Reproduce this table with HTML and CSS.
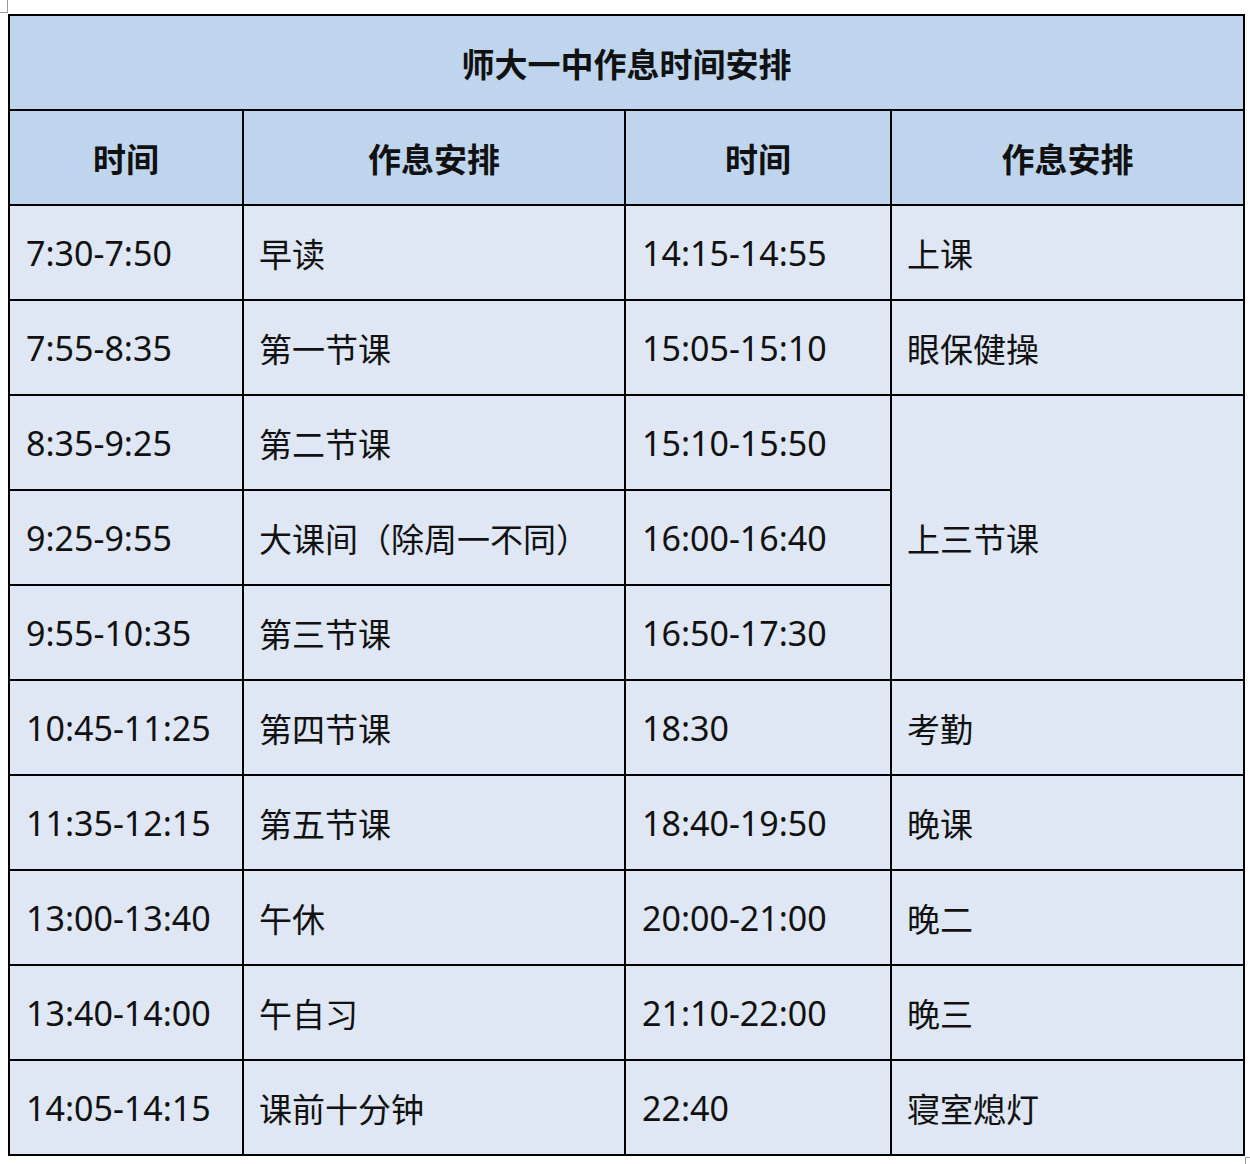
FILE: index.html
```html
<!DOCTYPE html>
<html lang="zh-CN">
<head>
<meta charset="utf-8">
<title>师大一中作息时间安排</title>
<link rel="stylesheet" href="styles.css">
</head>
<body>
<span class="mark mark-tl"></span>
<table class="schedule">
  <colgroup>
    <col class="c1"><col class="c2"><col class="c3"><col class="c4">
  </colgroup>
  <thead>
    <tr class="title-row"><th colspan="4">师大一中作息时间安排</th></tr>
    <tr class="head-row"><th>时间</th><th>作息安排</th><th>时间</th><th>作息安排</th></tr>
  </thead>
  <tbody>
    <tr><td>7:30-7:50</td><td>早读</td><td>14:15-14:55</td><td>上课</td></tr>
    <tr><td>7:55-8:35</td><td>第一节课</td><td>15:05-15:10</td><td>眼保健操</td></tr>
    <tr><td>8:35-9:25</td><td>第二节课</td><td>15:10-15:50</td><td rowspan="3">上三节课</td></tr>
    <tr><td>9:25-9:55</td><td>大课间（除周一不同）</td><td>16:00-16:40</td></tr>
    <tr><td>9:55-10:35</td><td>第三节课</td><td>16:50-17:30</td></tr>
    <tr><td>10:45-11:25</td><td>第四节课</td><td>18:30</td><td>考勤</td></tr>
    <tr><td>11:35-12:15</td><td>第五节课</td><td>18:40-19:50</td><td>晚课</td></tr>
    <tr><td>13:00-13:40</td><td>午休</td><td>20:00-21:00</td><td>晚二</td></tr>
    <tr><td>13:40-14:00</td><td>午自习</td><td>21:10-22:00</td><td>晚三</td></tr>
    <tr><td>14:05-14:15</td><td>课前十分钟</td><td>22:40</td><td>寝室熄灯</td></tr>
  </tbody>
</table>
<span class="mark mark-br"></span>
</body>
</html>
```
FILE: styles.css
```css
html, body {
  margin: 0;
  padding: 0;
  background: #ffffff;
}
body {
  padding: 14px 0 0 8px;
  font-family: "Noto Sans", "Noto Sans CJK SC", sans-serif;
  color: #111;
  position: relative;
  min-height: 1150px;
}
.schedule {
  border-collapse: collapse;
  table-layout: fixed;
  width: 1235px;
  border: 2px solid #000;
}
.c1 { width: 234px; }
.c2 { width: 382px; }
.c3 { width: 266px; }
.c4 { width: 353px; }
.schedule th,
.schedule td {
  border: 2px solid #000;
  height: 93px;
  padding: 0;
  vertical-align: middle;
}
.schedule th {
  background: #bed5ed;
  font-family: "Noto Sans CJK SC", sans-serif;
  font-weight: 700;
  font-size: 33px;
  text-align: center;
}
.schedule td {
  background: #dee7f3;
  font-size: 34px;
  font-weight: 400;
  text-align: left;
  padding-left: 16px;
}
.schedule td:nth-child(2),
.schedule td:nth-child(4) {
  font-family: "Noto Sans CJK SC", sans-serif;
  font-size: 33px;
  padding-left: 15px;
}
.mark {
  position: absolute;
  width: 7px;
  height: 12px;
  border-color: #9a9a9a;
  border-style: solid;
}
.mark-tl {
  left: 0;
  top: 0;
  border-width: 0 1px 1px 0;
}
.mark-br {
  left: 1245px;
  top: 1157px;
  border-width: 1px 0 0 1px;
}
```
